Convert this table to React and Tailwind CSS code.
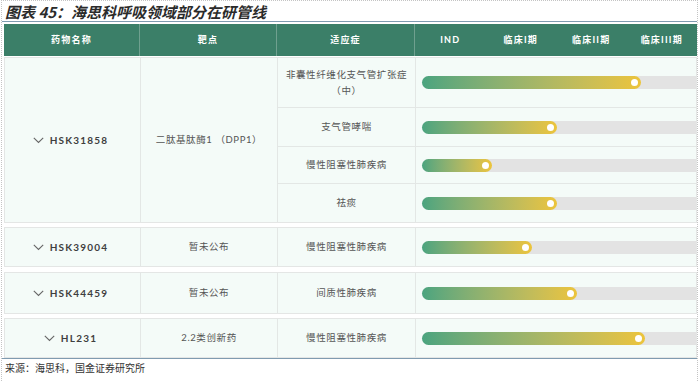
import React from "react";

const cols = "grid grid-cols-[136px_137px_138px_1fr]";

const groups = [
  {
    name: "HSK31858",
    target: "二肽基肽酶1 （DPP1）",
    rows: [
      { ind: ["非囊性纤维化支气管扩张症", "（中）"], fill: 219, h: "h-[50px]" },
      { ind: ["支气管哮喘"], fill: 135, h: "h-[39px]" },
      { ind: ["慢性阻塞性肺疾病"], fill: 70, h: "h-[37px]" },
      { ind: ["祛痰"], fill: 135, h: "h-[38px]" },
    ],
    mt: "mt-[1px]",
  },
  { name: "HSK39004", target: "暂未公布", rows: [{ ind: ["慢性阻塞性肺疾病"], fill: 110, h: "h-[38px]" }], mt: "mt-[4px]" },
  { name: "HSK44459", target: "暂未公布", rows: [{ ind: ["间质性肺疾病"], fill: 155, h: "h-[40px]" }], mt: "mt-[5px]" },
  { name: "HL231", target: "2.2类创新药", rows: [{ ind: ["慢性阻塞性肺疾病"], fill: 223, h: "h-[38px]" }], mt: "mt-[4px]" },
];

const Chevron = () => (
  <svg width="11" height="7" viewBox="0 0 11 7" className="shrink-0">
    <path d="M0.8 0.8 L5.5 5.5 L10.2 0.8" fill="none" stroke="#666" strokeWidth="1.1" />
  </svg>
);

const Bar = ({ fill }) => (
  <div className="h-[13px] w-full rounded-l-full bg-[#e3e3e3]">
    {/* width comes from data */}
    <div
      className="relative h-full rounded-full bg-linear-to-r from-[#4aa47f] to-[#ecc43b]"
      style={{ width: fill }}
    >
      <span className="absolute right-[3px] top-[3px] h-[7px] w-[7px] rounded-full bg-white" />
    </div>
  </div>
);

const Group = ({ g }) => (
  <div className={`${g.mt} ${cols} border border-[#e4e6e5] bg-[#f4fbf8]`}>
    <div className="flex items-center justify-center gap-[6px] border-r border-[#e3e7e5] pr-[4px] text-[10px] font-bold tracking-[1.2px] text-[#3f3f3f]">
      <Chevron />
      <span>{g.name}</span>
    </div>
    <div className="flex items-center justify-center border-r border-[#e3e7e5] text-[9.5px] tracking-[0.6px] text-[#555]">
      {g.target}
    </div>
    <div className="flex flex-col">
      {g.rows.map((r, i) => (
        <div
          key={i}
          className={`${r.h} flex flex-col items-center justify-center border-r border-[#e3e7e5] text-center text-[9.5px] leading-[16px] tracking-[0.6px] text-[#555] ${
            i < g.rows.length - 1 ? "border-b" : ""
          }`}
        >
          {r.ind.map((t) => (
            <span key={t}>{t}</span>
          ))}
        </div>
      ))}
    </div>
    <div className="flex flex-col">
      {g.rows.map((r, i) => (
        <div
          key={i}
          className={`${r.h} flex items-center pl-[6px] border-[#e3e7e5] ${i < g.rows.length - 1 ? "border-b" : ""}`}
        >
          <Bar fill={r.fill} />
        </div>
      ))}
    </div>
  </div>
);

export default function App() {
  return (
    <div className="h-[381px] w-[700px] bg-white pl-[1px] font-['Lato','Noto_Sans_CJK_SC',sans-serif]">
      <div className="h-full w-[697px] border-x border-t border-dotted border-[#c4c4c4]">
        <div className="flex h-[21px] items-center border-b border-[#7f9bb0] pl-[3px] font-['Noto_Sans_CJK_SC',sans-serif] text-[15px] font-bold italic leading-none text-[#2b2b2b]">
          图表 45：海思科呼吸领域部分在研管线
        </div>

        <div className="ml-[2px] mt-[2px]">
          <div className={`${cols} h-[32px] bg-[#3b7f68] text-[9px] font-bold tracking-[1.2px] text-white`}>
            <div className="flex items-center justify-center border-r border-[#6fa08f]">药物名称</div>
            <div className="flex items-center justify-center border-r border-[#6fa08f]">靶点</div>
            <div className="flex items-center justify-center border-r border-[#6fa08f]">适应症</div>
            <div className="grid grid-cols-4 items-center text-center">
              <span>IND</span>
              <span>临床I期</span>
              <span>临床II期</span>
              <span>临床III期</span>
            </div>
          </div>

          {groups.map((g) => (
            <Group key={g.name} g={g} />
          ))}
        </div>

        <div className="border-t border-[#7f9bb0] pl-[3px] pt-[2px] font-['Noto_Sans_CJK_SC',serif] text-[10px] leading-[14px] text-[#333]">
          来源：海思科，国金证券研究所
        </div>
      </div>
    </div>
  );
}
